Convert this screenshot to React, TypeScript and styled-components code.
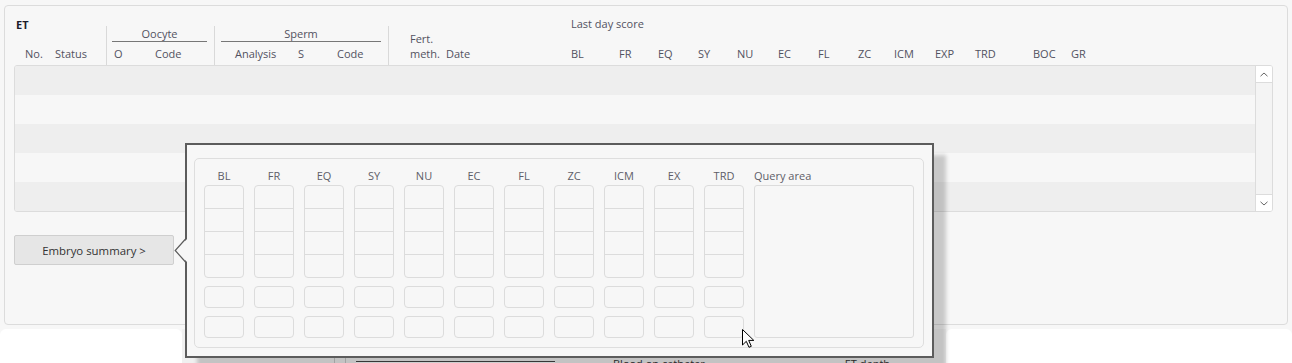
import React from 'react';
import styled, { createGlobalStyle } from 'styled-components';

const GlobalStyle = createGlobalStyle`
  html, body {
    margin: 0;
    padding: 0;
  }
  body {
    background: #f7f7f7;
    font-family: "Open Sans", "Noto Sans", "Liberation Sans", sans-serif;
    font-size: 11px;
    color: #52525f;
  }
`

const Page = styled.div`
  position: relative;
  width: 1292px;
  height: 363px;
  overflow: hidden;
  padding-top: 5px;
  box-sizing: border-box;
`

const Panel = styled.section`
  margin: 0 4px;
  height: 320px;
  box-sizing: border-box;
  border: 1px solid #dcdcdc;
  border-radius: 4px;
  background: #f7f7f7;
  padding: 0 14px 0 9px;
`

const Header = styled.div`
  height: 59px;
  display: flex;
  align-items: flex-end;
`

interface GroupProps {
  $w?: number
  $tall?: boolean
  $divider?: boolean
}

const Group = styled.div<GroupProps>`
  box-sizing: border-box;
  width: ${p => p.$w ? `${p.$w}px` : 'auto'};
  flex: ${p => p.$w ? 'none' : '1'};
  height: ${p => p.$tall ? 59 : 39}px;
  display: flex;
  flex-direction: column;
  border-left: ${p => p.$divider ? '1px solid #d9d9d9' : 'none'};
`

const Title = styled.div`
  margin: 11px 0 0 2px;
  line-height: 15px;
  font-weight: 700;
  color: #1d1d2b;
`

const ScoreTitle = styled.div`
  margin-top: 10px;
  line-height: 15px;
`

interface GroupTitleProps {
  $ml: number
}

const GroupTitle = styled.div<GroupTitleProps>`
  margin: 0 7px 0 ${p => p.$ml}px;
  line-height: 15px;
  text-align: center;
  border-bottom: 1px solid #777;
`

interface LabelRowProps {
  $pl?: number
}

const LabelRow = styled.div<LabelRowProps>`
  display: flex;
  align-items: flex-end;
  margin-top: auto;
  padding-left: ${p => p.$pl || 0}px;
  margin-bottom: 4px;
  line-height: 15px;
  white-space: nowrap;
`

interface CellProps {
  $w?: number
}

const Cell = styled.div<CellProps>`
  width: ${p => p.$w ? `${p.$w}px` : 'auto'};
  flex: none;
`

const Table = styled.div`
  box-sizing: border-box;
  height: 147px;
  border: 1px solid #dcdcdc;
  border-radius: 3px;
  display: flex;
  overflow: hidden;
`

const Rows = styled.div`
  flex: 1;
`

interface RowProps {
  $odd: boolean
}

const Row = styled.div<RowProps>`
  height: 29px;
  background: ${p => p.$odd ? '#eeeeee' : '#f7f7f7'};
`

const Scrollbar = styled.div`
  width: 16px;
  border-left: 1px solid #dcdcdc;
  background: #f4f4f4;
  display: flex;
  flex-direction: column;
  justify-content: space-between;
`

interface ScrollBtnProps {
  $down?: boolean
}

const ScrollBtn = styled.div<ScrollBtnProps>`
  height: 16px;
  background: #fff;
  border-top: ${p => p.$down ? '1px solid #dcdcdc' : 'none'};
  border-bottom: ${p => p.$down ? 'none' : '1px solid #dcdcdc'};
  display: flex;
  align-items: center;
  justify-content: center;
`

const SummaryButton = styled.button`
  display: block;
  margin-top: 23px;
  width: 160px;
  height: 30px;
  border: 1px solid #cfcfcf;
  border-radius: 2px;
  background: #e6e6e6;
  color: #333;
  font: inherit;
  font-size: 11.4px;
  padding: 0;
`

const Bottom = styled.div`
  display: flex;
  margin-top: 4px;
  height: 34px;
`

interface CardProps {
  $w?: number
}

const WhiteCard = styled.div<CardProps>`
  width: ${p => p.$w ? `${p.$w}px` : 'auto'};
  flex: ${p => p.$w ? 'none' : '1'};
  background: #fff;
  border-radius: 6px 6px 0 0;
`

const Middle = styled.div`
  flex: none;
  width: 764px;
  background: #f0f0f0;
  display: flex;
  align-items: flex-start;
  padding-top: 28px;
  box-sizing: border-box;
`

const VLine = styled.div`
  width: 1px;
  height: 20px;
  background: #c8c8c8;
  margin-left: 10px;
  &:first-child {
    margin-left: 152px;
  }
`

const Input = styled.div`
  width: 199px;
  height: 20px;
  margin: 4px 0 0 10px;
  border-top: 1px solid #444;
  background: #fff;
`

interface MidTextProps {
  $ml: number
}

const MidText = styled.div<MidTextProps>`
  margin: 0 0 0 ${p => p.$ml}px;
  line-height: 13px;
  color: #333;
  white-space: nowrap;
`

const Popup = styled.div`
  position: absolute;
  left: 185px;
  top: 143px;
  z-index: 2;
  border: 2px solid #5c5c5c;
  background: #f7f7f7;
  padding: 13px 8px 8px 7px;
  box-shadow: 12px 12px 4px rgba(0, 0, 0, 0.19);
`

const Arrow = styled.svg`
  position: absolute;
  left: -13px;
  top: 93px;
  display: block;
`

const Inner = styled.div`
  width: 710px;
  border: 1px solid #dedede;
  border-radius: 5px;
  padding: 9px;
  display: flex;
  gap: 10px;
`

interface ColumnProps {
  $w: number
}

const Column = styled.div<ColumnProps>`
  width: ${p => p.$w}px;
  display: flex;
  flex-direction: column;
`

interface ColLabelProps {
  $left?: boolean
}

const ColLabel = styled.div<ColLabelProps>`
  line-height: 15px;
  margin-bottom: 2px;
  text-align: ${p => p.$left ? 'left' : 'center'};
  color: #5e5e68;
  white-space: nowrap;
`

const Stack = styled.div`
  border: 1px solid #dcdcdc;
  border-radius: 4px;
`

const StackCell = styled.div`
  height: 22px;
  & + & {
    border-top: 1px solid #dcdcdc;
  }
`

const Box = styled.div`
  box-sizing: border-box;
  height: 22px;
  margin-top: 8px;
  border: 1px solid #dcdcdc;
  border-radius: 4px;
`

const QueryBox = styled.div`
  flex: 1;
  border: 1px solid #dcdcdc;
  border-radius: 3px;
`

const Cursor = styled.svg`
  position: absolute;
  left: 741px;
  top: 328px;
  z-index: 3;
`

const scoreLabels: [string, number][] = [
  ['BL', 48], ['FR', 39], ['EQ', 40], ['SY', 39], ['NU', 41], ['EC', 40], ['FL', 40],
  ['ZC', 36], ['ICM', 41], ['EXP', 40], ['TRD', 58], ['BOC', 38], ['GR', 30],
]

const popupCols = ['BL', 'FR', 'EQ', 'SY', 'NU', 'EC', 'FL', 'ZC', 'ICM', 'EX', 'TRD']

function Chevron({ down }: { down?: boolean }) {
  return <svg width="8" height="5" viewBox="0 0 8 5">
    <polyline
      points={down ? '0.5,0.8 4,4 7.5,0.8' : '0.5,4.2 4,1 7.5,4.2'}
      fill="none" stroke="#666" strokeWidth="1"
    />
  </svg>;
}

export default function App() {
  return <Page>
    <GlobalStyle />
    <Panel>
      <Header>
        <Group $w={92} $tall>
          <Title>ET</Title>
          <LabelRow $pl={11}>
            <Cell $w={30}>No.</Cell>
            <Cell>Status</Cell>
          </LabelRow>
        </Group>
        <Group $w={108} $divider>
          <GroupTitle $ml={5}>Oocyte</GroupTitle>
          <LabelRow $pl={7}>
            <Cell $w={41}>O</Cell>
            <Cell>Code</Cell>
          </LabelRow>
        </Group>
        <Group $w={174} $divider>
          <GroupTitle $ml={6}>Sperm</GroupTitle>
          <LabelRow $pl={20}>
            <Cell $w={63}>Analysis</Cell>
            <Cell $w={39}>S</Cell>
            <Cell>Code</Cell>
          </LabelRow>
        </Group>
        <Group $w={183} $divider>
          <LabelRow $pl={21}>
            <Cell $w={36}>Fert.<br />meth.</Cell>
            <Cell>Date</Cell>
          </LabelRow>
        </Group>
        <Group $tall>
          <ScoreTitle>Last day score</ScoreTitle>
          <LabelRow>
            {scoreLabels.map(([name, w]) => <Cell key={name} $w={w}>{name}</Cell>)}
          </LabelRow>
        </Group>
      </Header>

      <Table>
        <Rows>
          {[0, 1, 2, 3, 4].map(i => <Row key={i} $odd={i % 2 === 0} />)}
        </Rows>
        <Scrollbar>
          <ScrollBtn><Chevron /></ScrollBtn>
          <ScrollBtn $down><Chevron down /></ScrollBtn>
        </Scrollbar>
      </Table>

      <SummaryButton>Embryo summary &gt;</SummaryButton>
    </Panel>

    <Bottom>
      <WhiteCard $w={182} />
      <Middle>
        <VLine />
        <VLine />
        <Input />
        <MidText $ml={58}>Blood on catheter</MidText>
        <MidText $ml={140}>ET depth</MidText>
      </Middle>
      <WhiteCard />
    </Bottom>

    <Popup>
      <Arrow width="14" height="26" viewBox="0 0 14 26">
        <polygon points="14,0 1.5,12.5 14,25" fill="#f7f7f7" />
        <polyline points="12,0.5 1.2,12.5 12,24.5" fill="none" stroke="#5c5c5c" strokeWidth="1.2" />
      </Arrow>
      <Inner>
        {popupCols.map(name => <Column key={name} $w={40}>
          <ColLabel>{name}</ColLabel>
          <Stack>
            {[0, 1, 2, 3].map(i => <StackCell key={i} />)}
          </Stack>
          <Box />
          <Box />
        </Column>)}
        <Column $w={160}>
          <ColLabel $left>Query area</ColLabel>
          <QueryBox />
        </Column>
      </Inner>
    </Popup>

    <Cursor width="14" height="21" viewBox="0 0 14 21">
      <path d="M1.5 1.5 L1.5 17 L5.3 13.3 L8 19.3 L10.3 18.3 L7.7 12.4 L12.8 12.4 Z"
        fill="#fff" stroke="#000" strokeWidth="1" strokeLinejoin="miter" />
    </Cursor>
  </Page>;
}
